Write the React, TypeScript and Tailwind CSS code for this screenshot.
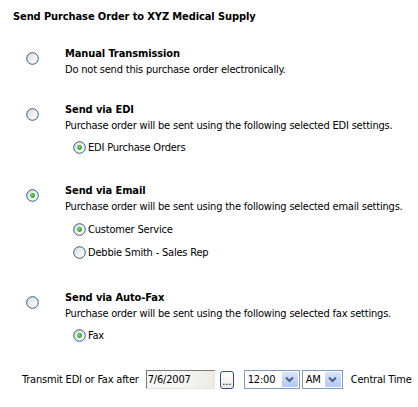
import React from 'react';

const Radio = ({ checked = false }: { checked?: boolean }) => (
  <svg width="13" height="13" viewBox="0 0 13 13" className="shrink-0">
    <defs>
      <linearGradient id="rg" x1="0" y1="0" x2="1" y2="1">
        <stop offset="0" stopColor="#d6d6d0" />
        <stop offset="0.6" stopColor="#f4f4f2" />
        <stop offset="1" stopColor="#ffffff" />
      </linearGradient>
      <radialGradient id="dot" cx="0.4" cy="0.4" r="0.6">
        <stop offset="0" stopColor="#6ee06e" />
        <stop offset="1" stopColor="#1c9a1c" />
      </radialGradient>
    </defs>
    <circle cx="6.5" cy="6.5" r="5.8" fill="url(#rg)" stroke="#2c5d8c" strokeWidth="1" />
    {checked && <circle cx="6.5" cy="6.5" r="2.4" fill="url(#dot)" />}
  </svg>
);

const SubOption = ({ label, checked }: { label: string; checked?: boolean }) => (
  <div className="flex items-center h-[17px] ml-[8px]">
    <Radio checked={checked} />
    <span className="ml-[2px]">{label}</span>
  </div>
);

const Option = ({
  title,
  desc,
  checked,
  className,
  children,
}: {
  title: string;
  desc: string;
  checked?: boolean;
  className?: string;
  children?: React.ReactNode;
}) => (
  <div className={`flex ${className ?? ''}`}>
    <div className="mt-[6px]">
      <Radio checked={checked} />
    </div>
    <div className="ml-[26px]">
      <div className="font-bold tracking-[-0.1px]">{title}</div>
      <div>{desc}</div>
      {children}
    </div>
  </div>
);

const Chevron = () => (
  <div className="w-[16px] h-[15px] bg-gradient-to-b from-[#d8e4fc] to-[#b4c8f4] flex items-center justify-center rounded-[1px]">
    <svg width="9" height="7" viewBox="0 0 9 7">
      <path d="M1 1.5 L4.5 5 L8 1.5" fill="none" stroke="#4d6185" strokeWidth="2" />
    </svg>
  </div>
);

export default function App() {
  return (
    <div
      className="w-[418px] h-[407px] bg-white text-black text-[11px] leading-[16px] tracking-[-0.2px] overflow-hidden"
      style={{ fontFamily: '"DejaVu Sans Condensed", "Liberation Sans", sans-serif' }}
    >
      <div className="pt-[9px] pl-[13px] font-bold tracking-[-0.1px]">Send Purchase Order to XYZ Medical Supply</div>

      <div className="pl-[26px]">
        <Option
          className="mt-[21px]"
          title="Manual Transmission"
          desc="Do not send this purchase order electronically."
        />
        <Option
          className="mt-[24px]"
          title="Send via EDI"
          desc="Purchase order will be sent using the following selected EDI settings."
        >
          <div className="mt-[5px]">
            <SubOption label="EDI Purchase Orders" checked />
          </div>
        </Option>
        <Option
          className="mt-[27px]"
          checked
          title="Send via Email"
          desc="Purchase order will be sent using the following selected email settings."
        >
          <div className="mt-[6px] flex flex-col gap-[6px]">
            <SubOption label="Customer Service" checked />
            <SubOption label="Debbie Smith - Sales Rep" />
          </div>
        </Option>
        <Option
          className="mt-[29px]"
          title="Send via Auto-Fax"
          desc="Purchase order will be sent using the following selected fax settings."
        >
          <div className="mt-[5px]">
            <SubOption label="Fax" checked />
          </div>
        </Option>
      </div>

      <div className="flex items-center pl-[22px] mt-[26px] h-[19px]">
        <span>Transmit EDI or Fax after</span>
        <div className="ml-[7px] w-[69px] h-[19px] border border-t-[#7a7a7a] border-l-[#7a7a7a] border-r-[#e4e4e4] border-b-[#e4e4e4] bg-gradient-to-r from-[#f6f6f4] via-[#f6f6f4] to-[#ecebe6] flex items-center px-[1px]">
          7/6/2007
        </div>
        <div className="ml-[5px] w-[14px] h-[18px] rounded-[3px] border border-[#2a4f86] bg-gradient-to-b from-white to-[#eceae2] flex items-end justify-center leading-[12px]">
          ...
        </div>
        <div className="ml-[10px] w-[56px] h-[19px] border border-[#7f9db9] bg-white flex items-center justify-between pl-[3px] pr-[1px]">
          <span>12:00</span>
          <Chevron />
        </div>
        <div className="ml-[2px] w-[41px] h-[19px] border border-[#7f9db9] bg-white flex items-center justify-between pl-[3px] pr-[1px]">
          <span>AM</span>
          <Chevron />
        </div>
        <span className="ml-[8px]">Central Time</span>
      </div>
    </div>
  );
}
